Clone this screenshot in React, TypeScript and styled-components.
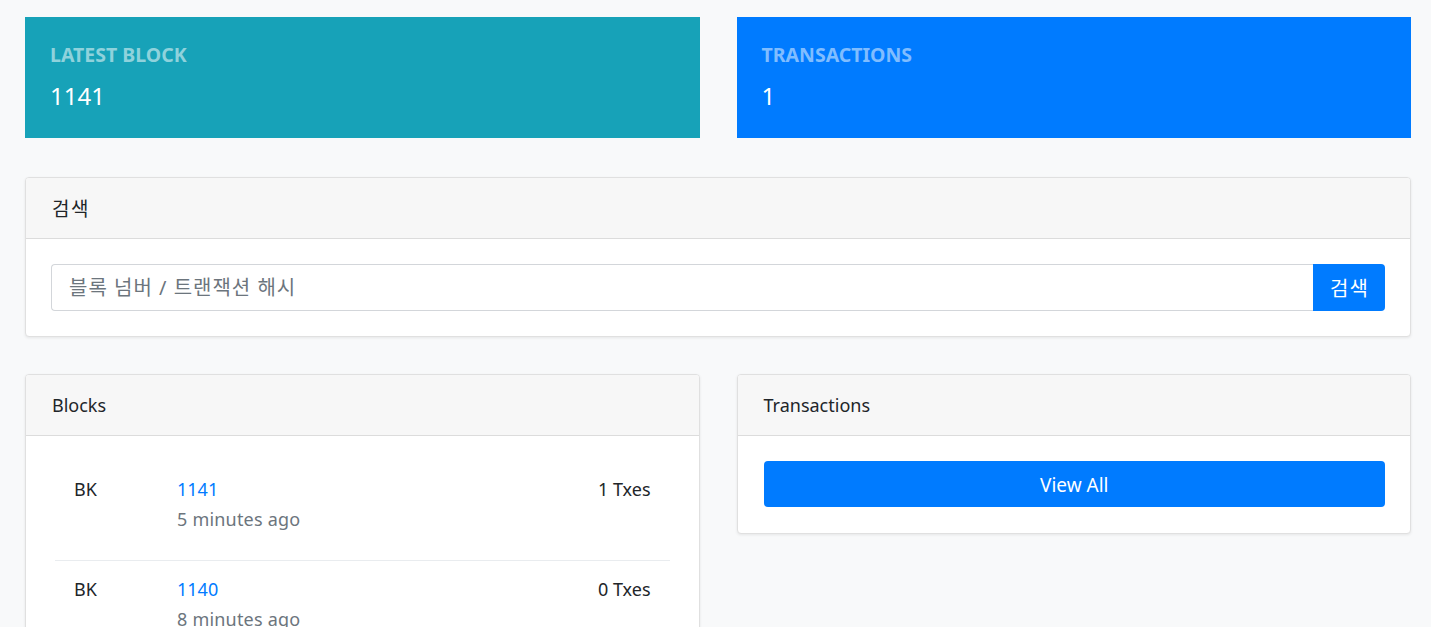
import React from "react";
import styled, { createGlobalStyle } from "styled-components";

const Global = createGlobalStyle`
  html, body { margin: 0; padding: 0; background: #f8f9fa; }
  body {
    font-family: "Noto Sans", "Noto Sans CJK KR", sans-serif;
    color: #212529;
    font-size: 18px;
  }
  * { box-sizing: border-box; }
`;

const Page = styled.div`
  padding: 17px 20px 20px 25px;
`;

const TwoCols = styled.div<{ $mb?: number }>`
  display: grid;
  grid-template-columns: 1fr 1fr;
  column-gap: 37px;
  align-items: start;
  margin-bottom: ${(p) => p.$mb ?? 0}px;
`;

const Stat = styled.div<{ $bg: string; $label: string }>`
  background: ${(p) => p.$bg};
  height: 121px;
  padding: 26px 25px 0;
  color: #fff;
  & > h6 {
    margin: 0;
    font-size: 19.5px;
    font-weight: 700;
    line-height: 24px;
    color: ${(p) => p.$label};
  }
  & > div {
    margin-top: 14px;
    font-size: 24px;
    line-height: 30px;
  }
`;

const Card = styled.div<{ $mb?: number }>`
  background: #fff;
  border: 1px solid #e0e0e0;
  border-radius: 4px;
  box-shadow: 0 1px 3px rgba(0, 0, 0, 0.08);
  margin-bottom: ${(p) => p.$mb ?? 0}px;
  overflow: hidden;
`;

const CardHeader = styled.div<{ $ko?: boolean }>`
  height: 61px;
  display: flex;
  align-items: center;
  padding: 0 26px;
  background: #f7f7f7;
  border-bottom: 1px solid #dcdcdc;
  font-size: ${(p) => (p.$ko ? 19 : 18)}px;
  letter-spacing: ${(p) => (p.$ko ? 1.5 : 0)}px;
  color: #212529;
`;

const CardBody = styled.div<{ $pad: string }>`
  padding: ${(p) => p.$pad};
`;

const InputGroup = styled.div`
  display: flex;
  height: 47px;
`;

const SearchInput = styled.input`
  flex: 1;
  border: 1px solid #d3d6da;
  border-right: none;
  border-radius: 4px 0 0 4px;
  padding: 0 17px;
  font-family: "Noto Sans", "Noto Sans CJK KR", sans-serif;
  font-size: 20px;
  letter-spacing: 1px;
  color: #495057;
  outline: none;
  &::placeholder { color: #6c757d; }
`;

const SearchButton = styled.button`
  width: 72px;
  border: none;
  background: #007bff;
  color: #fff;
  border-radius: 0 4px 4px 0;
  font-family: "Noto Sans", "Noto Sans CJK KR", sans-serif;
  font-size: 20px;
  letter-spacing: 1px;
  padding: 0 0 0 1px;
`;

const BlockRow = styled.div`
  display: grid;
  grid-template-columns: 103px 1fr auto;
  padding: 13px 19px 26px;
  border-bottom: 1px solid #e9ecef;
  line-height: 30px;
  font-size: 18px;
`;

const Link = styled.a`
  color: #007bff;
  text-decoration: none;
  display: block;
`;

const Muted = styled.div`
  color: #6c757d;
  letter-spacing: 0.2px;
`;

const WideButton = styled.button`
  width: 100%;
  height: 46px;
  border: none;
  border-radius: 4px;
  background: #007bff;
  color: #fff;
  font-family: "Noto Sans", "Noto Sans CJK KR", sans-serif;
  font-size: 19px;
  padding-top: 3px;
`;

const blocks = [
  { n: 1141, t: "5 minutes ago", tx: 1 },
  { n: 1140, t: "8 minutes ago", tx: 0 },
];

export default function App() {
  return (
    <Page>
      <Global />
      <TwoCols $mb={39}>
        <Stat $bg="#17a2b8" $label="#8fd2dc">
          <h6>LATEST BLOCK</h6>
          <div>1141</div>
        </Stat>
        <Stat $bg="#007bff" $label="#80bdff">
          <h6>TRANSACTIONS</h6>
          <div>1</div>
        </Stat>
      </TwoCols>
      <Card $mb={37}>
        <CardHeader $ko>검색</CardHeader>
        <CardBody $pad="25px 25px 25px 25px">
          <InputGroup>
            <SearchInput placeholder="블록 넘버 / 트랜잭션 해시" />
            <SearchButton>검색</SearchButton>
          </InputGroup>
        </CardBody>
      </Card>
      <TwoCols>
        <Card>
          <CardHeader>Blocks</CardHeader>
          <CardBody $pad="25px 29px 25px 29px">
            {blocks.map((b) => (
              <BlockRow key={b.n}>
                <div>BK</div>
                <div>
                  <Link href="#">{b.n}</Link>
                  <Muted>{b.t}</Muted>
                </div>
                <div>{b.tx} Txes</div>
              </BlockRow>
            ))}
          </CardBody>
        </Card>
        <Card>
          <CardHeader>Transactions</CardHeader>
          <CardBody $pad="25px 25px 26px 26px">
            <WideButton>View All</WideButton>
          </CardBody>
        </Card>
      </TwoCols>
    </Page>
  );
}
